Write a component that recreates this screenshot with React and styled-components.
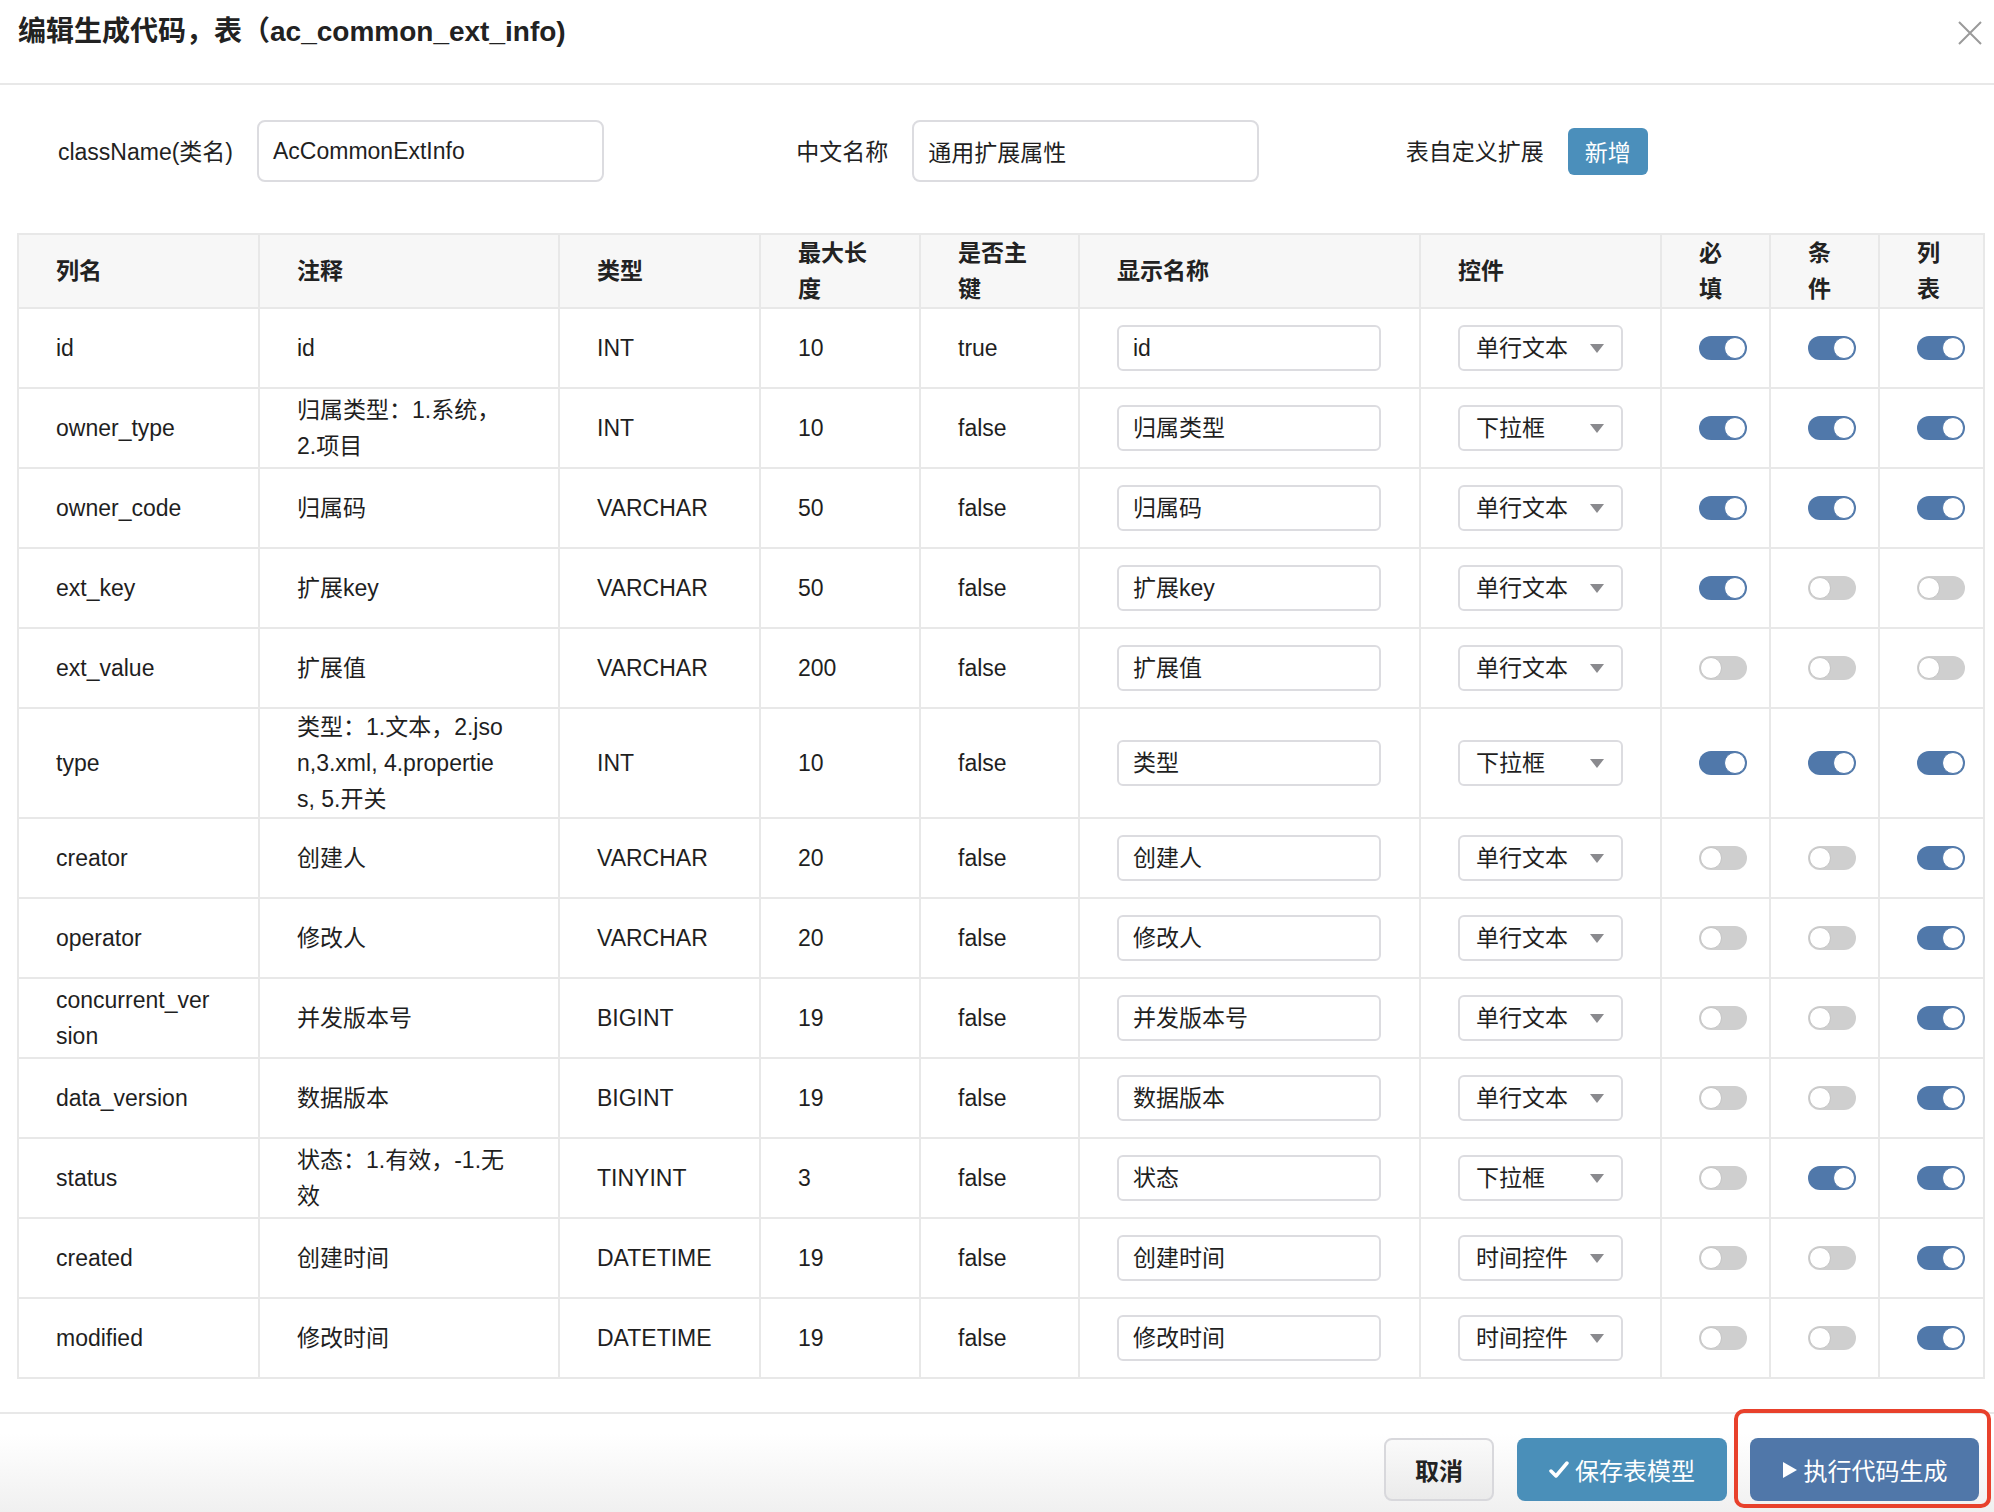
import React from 'react'
import styled, { createGlobalStyle } from 'styled-components'

const GlobalStyle = createGlobalStyle`
  body {
    margin: 0;
    background: #fff;
    font-family: "Liberation Sans", "Noto Sans CJK SC", sans-serif;
    color: #1f1f1f;
  }
`

const ON = '#5078aa'
const LINE = '#e8e8e8'

const Modal = styled.div`
  width: 1994px;
  height: 1512px;
  display: flex;
  flex-direction: column;
  overflow: hidden;
`

const Header = styled.div`
  height: 85px;
  box-sizing: border-box;
  flex: none;
  display: flex;
  align-items: flex-start;
  justify-content: space-between;
  padding: 12px 12px 0 18px;
  border-bottom: 2px solid ${LINE};
`

const Title = styled.h4`
  margin: 0;
  font-size: 28px;
  line-height: 40px;
  font-weight: bold;
  color: #222;
`

const Close = styled.button`
  border: none;
  background: none;
  padding: 0;
  margin-top: 9px;
  width: 24px;
  height: 24px;
  display: flex;
`

const Body = styled.div`
  flex: 1;
  padding: 35px 11px 0 17px;
`

const FormRow = styled.div`
  display: grid;
  grid-template-columns: repeat(3, 1fr);
  margin-bottom: 51px;
`

const Field = styled.div`
  display: flex;
  align-items: center;
  gap: 24px;
`

const Label = styled.label`
  width: 216px;
  text-align: right;
  font-size: 23px;
  color: #222;
  margin-top: -3px;
`

const BigInput = styled.div`
  width: 347px;
  height: 62px;
  box-sizing: border-box;
  border: 2px solid #dcdce0;
  border-radius: 8px;
  padding-left: 14px;
  display: flex;
  align-items: center;
  font-size: 23px;
  color: #1f1f1f;
`

const AddButton = styled.button`
  width: 80px;
  height: 47px;
  border: none;
  border-radius: 6px;
  background: #4b8fbb;
  color: #fff;
  font-family: inherit;
  font-size: 23px;
  padding: 0;
`

const Table = styled.table`
  width: 100%;
  table-layout: fixed;
  border-collapse: collapse;
  border: 2px solid #dcdce0;
  font-size: 23px;
  line-height: 36px;
`

const Th = styled.th`
  background: #f7f7f7;
  height: 72px;
  padding: 0 40px 0 37px;
  text-align: left;
  font-weight: bold;
  color: #222;
  border: 2px solid ${LINE};
  word-break: break-all;
`

const Td = styled.td`
  height: 78px;
  padding: 0 14px 0 37px;
  border: 2px solid ${LINE};
  vertical-align: middle;
  word-break: break-all;
  white-space: pre-line;
`

const CellInput = styled.div`
  width: 264px;
  height: 46px;
  box-sizing: border-box;
  border: 2px solid #dcdce0;
  border-radius: 6px;
  padding-left: 14px;
  display: flex;
  align-items: center;
`

const Select = styled.div`
  width: 165px;
  height: 46px;
  box-sizing: border-box;
  border: 2px solid #dcdce0;
  border-radius: 6px;
  padding: 0 17px 0 16px;
  display: flex;
  align-items: center;
  justify-content: space-between;
`

const Caret = styled.span`
  width: 0;
  height: 0;
  border-left: 7px solid transparent;
  border-right: 7px solid transparent;
  border-top: 9px solid #8a8a8e;
`

const Switch = styled.span`
  position: relative;
  display: block;
  width: 48px;
  height: 24px;
  border-radius: 12px;
  background: ${p => (p.$on ? ON : '#cfcfcf')};
  &::after {
    content: '';
    position: absolute;
    top: 1px;
    left: ${p => (p.$on ? '25px' : '1px')};
    width: 20px;
    height: 20px;
    border-radius: 50%;
    background: #fff;
    border: 1px solid ${p => (p.$on ? ON : '#c4c4c4')};
  }
`

const Footer = styled.div`
  flex: 1;
  border-top: 2px solid ${LINE};
  margin-top: 33px;
  background: linear-gradient(#fff 20%, #f0f0f0);
  display: flex;
  justify-content: flex-end;
  align-items: flex-start;
  gap: 23px;
  padding: 24px 15px 0 0;
`

const Button = styled.button`
  position: relative;
  height: 63px;
  width: ${p => p.$w}px;
  border-radius: 8px;
  font-family: inherit;
  font-size: 24px;
  display: flex;
  align-items: center;
  justify-content: center;
  gap: 6px;
  padding: 0;
  border: ${p => (p.$kind === 'default' ? '2px solid #d8d8dc' : 'none')};
  background: ${p =>
    p.$kind === 'default'
      ? 'linear-gradient(#fafafa, #ebebeb)'
      : p.$kind === 'info'
      ? '#4a8fb9'
      : '#5077a9'};
  color: ${p => (p.$kind === 'default' ? '#222' : '#fff')};
  font-weight: ${p => (p.$kind === 'default' ? 'bold' : 'normal')};
`

const Highlight = styled.span`
  position: absolute;
  left: -16px;
  right: -12px;
  top: -29px;
  bottom: -7px;
  border: 4px solid #e8412c;
  border-radius: 10px;
  pointer-events: none;
`

const cols = [241, 300, 201, 160, 159, 341, 241, 109, 109, 105]
const heads = ['列名', '注释', '类型', '最大长度', '是否主键', '显示名称', '控件', '必填', '条件', '列表']

const rows = [
  ['id', 'id', 'INT', '10', 'true', 'id', '单行文本', 1, 1, 1],
  ['owner_type', '归属类型：1.系统，\n2.项目', 'INT', '10', 'false', '归属类型', '下拉框', 1, 1, 1],
  ['owner_code', '归属码', 'VARCHAR', '50', 'false', '归属码', '单行文本', 1, 1, 1],
  ['ext_key', '扩展key', 'VARCHAR', '50', 'false', '扩展key', '单行文本', 1, 0, 0],
  ['ext_value', '扩展值', 'VARCHAR', '200', 'false', '扩展值', '单行文本', 0, 0, 0],
  ['type', '类型：1.文本，2.jso\nn,3.xml, 4.propertie\ns, 5.开关', 'INT', '10', 'false', '类型', '下拉框', 1, 1, 1],
  ['creator', '创建人', 'VARCHAR', '20', 'false', '创建人', '单行文本', 0, 0, 1],
  ['operator', '修改人', 'VARCHAR', '20', 'false', '修改人', '单行文本', 0, 0, 1],
  ['concurrent_ver\nsion', '并发版本号', 'BIGINT', '19', 'false', '并发版本号', '单行文本', 0, 0, 1],
  ['data_version', '数据版本', 'BIGINT', '19', 'false', '数据版本', '单行文本', 0, 0, 1],
  ['status', '状态：1.有效，-1.无\n效', 'TINYINT', '3', 'false', '状态', '下拉框', 0, 1, 1],
  ['created', '创建时间', 'DATETIME', '19', 'false', '创建时间', '时间控件', 0, 0, 1],
  ['modified', '修改时间', 'DATETIME', '19', 'false', '修改时间', '时间控件', 0, 0, 1],
]

export default function App() {
  return (
    <Modal>
      <GlobalStyle />
      <Header>
        <Title>编辑生成代码，表（ac_common_ext_info)</Title>
        <Close>
          <svg width="24" height="24" viewBox="0 0 24 24">
            <path d="M1 1L23 23M23 1L1 23" stroke="#9a9a9a" strokeWidth="2" fill="none" />
          </svg>
        </Close>
      </Header>
      <Body>
        <FormRow>
          <Field>
            <Label>className(类名)</Label>
            <BigInput>AcCommonExtInfo</BigInput>
          </Field>
          <Field>
            <Label>中文名称</Label>
            <BigInput>通用扩展属性</BigInput>
          </Field>
          <Field>
            <Label>表自定义扩展</Label>
            <AddButton>新增</AddButton>
          </Field>
        </FormRow>
        <Table>
          <colgroup>
            {cols.map((w, i) => (
              <col key={i} style={{ width: w }} />
            ))}
          </colgroup>
          <thead>
            <tr>
              {heads.map(h => (
                <Th key={h}>{h}</Th>
              ))}
            </tr>
          </thead>
          <tbody>
            {rows.map(r => (
              <tr key={r[0]}>
                <Td>{r[0]}</Td>
                <Td>{r[1]}</Td>
                <Td>{r[2]}</Td>
                <Td>{r[3]}</Td>
                <Td>{r[4]}</Td>
                <Td>
                  <CellInput>{r[5]}</CellInput>
                </Td>
                <Td>
                  <Select>
                    {r[6]}
                    <Caret />
                  </Select>
                </Td>
                <Td><Switch $on={!!r[7]} /></Td>
                <Td><Switch $on={!!r[8]} /></Td>
                <Td><Switch $on={!!r[9]} /></Td>
              </tr>
            ))}
          </tbody>
        </Table>
      </Body>
      <Footer>
        <Button $kind="default" $w={110}>取消</Button>
        <Button $kind="info" $w={210}>
          <svg width="20" height="20" viewBox="0 0 20 20">
            <path d="M2 11l5 5L18 3" stroke="#fff" strokeWidth="3.5" fill="none" strokeLinecap="round" strokeLinejoin="round" />
          </svg>
          保存表模型
        </Button>
        <Button $kind="primary" $w={229}>
          <svg width="16" height="18" viewBox="0 0 16 18">
            <path d="M1 1L15 9L1 17Z" fill="#fff" />
          </svg>
          执行代码生成
          <Highlight />
        </Button>
      </Footer>
    </Modal>
  )
}
